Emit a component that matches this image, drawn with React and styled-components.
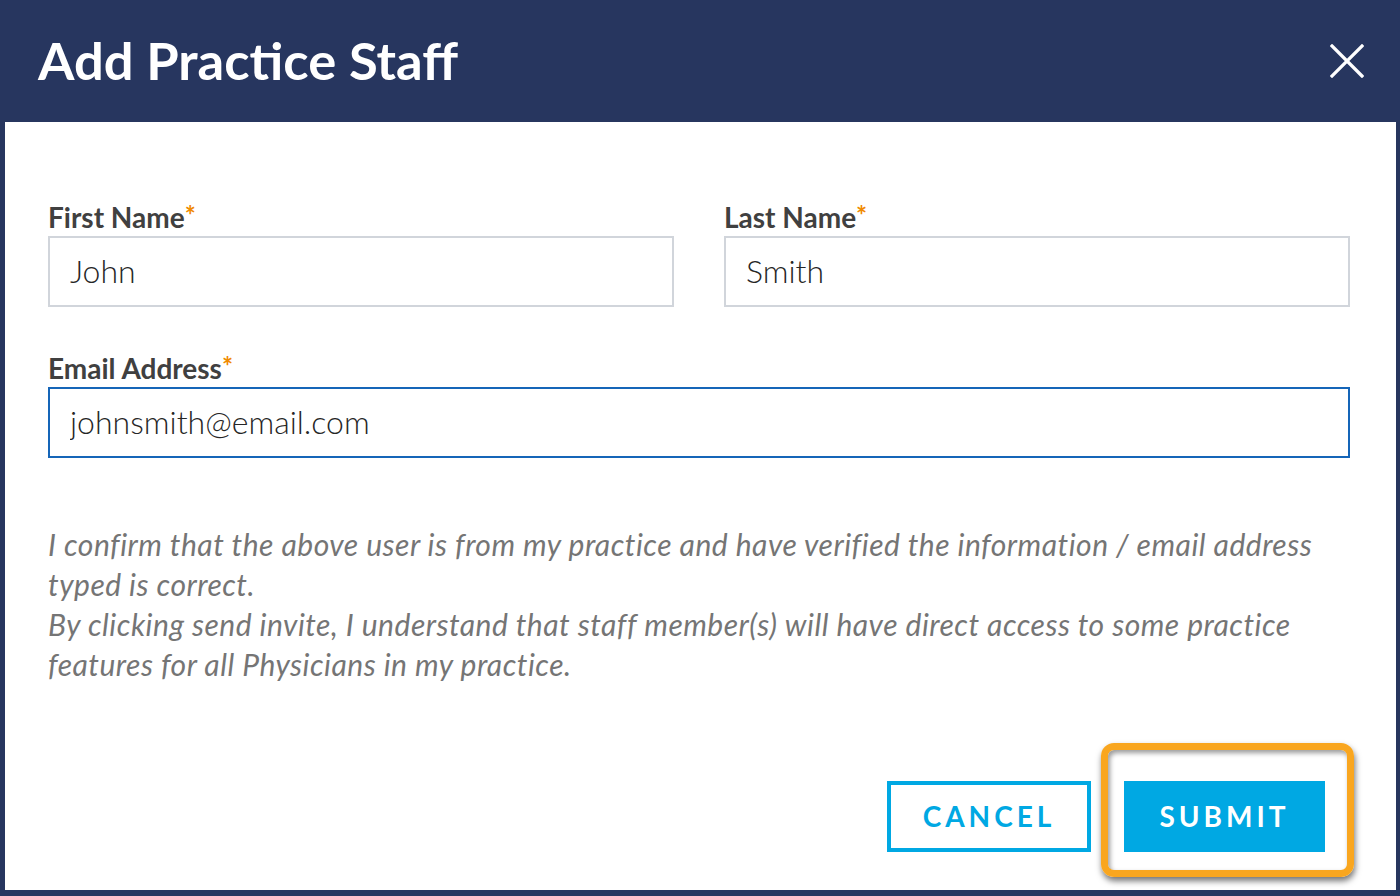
import React from 'react';
import styled, { createGlobalStyle } from 'styled-components';

const colors = {
  navy: '#27365f',
  label: '#404040',
  required: '#f08a00',
  inputBorder: '#d1d5db',
  focusBorder: '#1565b8',
  note: '#757575',
  accent: '#00a8e3',
  highlight: '#f9a61f'
};

const GlobalStyle = createGlobalStyle`
  html, body {
    margin: 0;
    padding: 0;
    background: ${colors.navy};
  }
  * {
    box-sizing: border-box;
  }
`;

const Page = styled.div`
  width: 1400px;
  height: 896px;
  display: flex;
  flex-direction: column;
  background: ${colors.navy};
  font-family: Lato, 'Open Sans', sans-serif;
  overflow: hidden;
`;

const Header = styled.header`
  height: 122px;
  flex-shrink: 0;
  display: flex;
  align-items: center;
  justify-content: space-between;
  padding: 0 35px 0 38px;
`;

const Title = styled.h1`
  margin: 0 0 4px;
  color: #fff;
  font-size: 52.5px;
  font-weight: 700;
`;

const CloseButton = styled.button`
  width: 36px;
  height: 36px;
  padding: 0;
  border: none;
  background: none;
  cursor: pointer;
  display: flex;
  align-items: center;
  justify-content: center;
`;

const Body = styled.div`
  flex: 1;
  margin: 0 4px 6px 5px;
  background: #fff;
  padding: 76px 46px 0 43px;
  display: flex;
  flex-direction: column;
`;

const Row = styled.div`
  display: grid;
  grid-template-columns: ${({ cols }) => cols || '1fr'};
  column-gap: 50px;
  margin-bottom: ${({ gap }) => gap || 0}px;
`;

const Field = styled.div`
  display: flex;
  flex-direction: column;
`;

const Label = styled.label`
  font-size: 28px;
  line-height: 34px;
  font-weight: 700;
  color: ${colors.label};
  margin-bottom: 2px;
`;

const Star = styled.span`
  color: ${colors.required};
  font-size: 26px;
  vertical-align: 3px;
`;

const Input = styled.input`
  height: 71px;
  width: 100%;
  border: 2px solid ${({ focused }) => (focused ? colors.focusBorder : colors.inputBorder)};
  border-radius: 0;
  padding: 0 20px 3px;
  font-family: Lato, 'Open Sans', sans-serif;
  font-size: 32px;
  font-weight: 300;
  color: #262626;
  outline: none;
  background: #fff;
`;

const Note = styled.p`
  margin: 0;
  font-size: 30px;
  line-height: 40px;
  letter-spacing: 0.5px;
  font-style: italic;
  color: ${colors.note};
`;

const Actions = styled.div`
  display: flex;
  justify-content: flex-end;
  gap: 33px;
  margin-top: 97px;
  padding-right: 25px;
`;

const Button = styled.button`
  width: ${({ w }) => w}px;
  height: 71px;
  border: 4px solid ${colors.accent};
  background: ${({ primary }) => (primary ? colors.accent : '#fff')};
  color: ${({ primary }) => (primary ? '#fff' : colors.accent)};
  font-family: Lato, 'Open Sans', sans-serif;
  font-size: 28px;
  font-weight: 700;
  letter-spacing: 4px;
  padding: 0 0 2px;
  cursor: pointer;
`;

const Highlight = styled.div`
  position: relative;

  &::after {
    content: '';
    position: absolute;
    top: -38px;
    left: -23px;
    right: -29px;
    bottom: -25px;
    border: 7px solid ${colors.highlight};
    border-radius: 13px;
    box-shadow: 1px 4px 6px rgba(0, 0, 0, 0.55), inset 2px 3px 5px rgba(0, 0, 0, 0.4);
    pointer-events: none;
  }
`;

const CloseIcon = () => (
  <svg width="34" height="34" viewBox="0 0 34 34">
    <path d="M2 2 L32 32 M32 2 L2 32" stroke="#fff" strokeWidth="3.2" strokeLinecap="square" />
  </svg>
);

const App = () => (
  <Page>
    <GlobalStyle />
    <Header>
      <Title>Add Practice Staff</Title>
      <CloseButton aria-label='Close'>
        <CloseIcon />
      </CloseButton>
    </Header>
    <Body>
      <Row cols='1fr 1fr' gap={42}>
        <Field>
          <Label>
            First Name<Star>*</Star>
          </Label>
          <Input defaultValue='John' />
        </Field>
        <Field>
          <Label>
            Last Name<Star>*</Star>
          </Label>
          <Input defaultValue='Smith' />
        </Field>
      </Row>
      <Row gap={66}>
        <Field>
          <Label>
            Email Address<Star>*</Star>
          </Label>
          <Input focused defaultValue='johnsmith@email.com' />
        </Field>
      </Row>
      <Note>
        I confirm that the above user is from my practice and have verified the information / email address typed is correct.
      </Note>
      <Note>
        By clicking send invite, I understand that staff member(s) will have direct access to some practice features for all Physicians in my practice.
      </Note>
      <Actions>
        <Button w={204}>CANCEL</Button>
        <Highlight>
          <Button primary w={201}>SUBMIT</Button>
        </Highlight>
      </Actions>
    </Body>
  </Page>
);

export default App;
